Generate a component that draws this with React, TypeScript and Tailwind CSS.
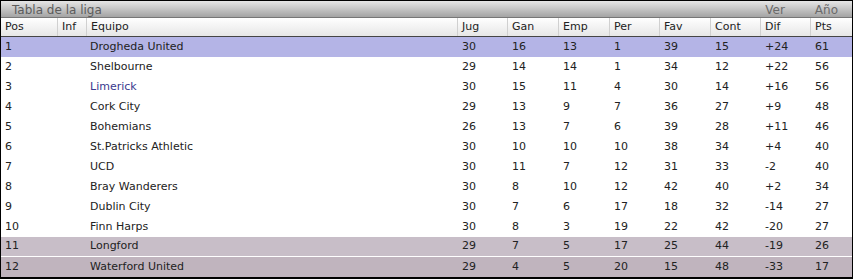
import React from 'react';

type Row = {
  pos: number;
  team: string;
  jug: number;
  gan: number;
  emp: number;
  per: number;
  fav: number;
  cont: number;
  dif: string;
  pts: number;
};

const rows: Row[] = [
  { pos: 1, team: 'Drogheda United', jug: 30, gan: 16, emp: 13, per: 1, fav: 39, cont: 15, dif: '+24', pts: 61 },
  { pos: 2, team: 'Shelbourne', jug: 29, gan: 14, emp: 14, per: 1, fav: 34, cont: 12, dif: '+22', pts: 56 },
  { pos: 3, team: 'Limerick', jug: 30, gan: 15, emp: 11, per: 4, fav: 30, cont: 14, dif: '+16', pts: 56 },
  { pos: 4, team: 'Cork City', jug: 29, gan: 13, emp: 9, per: 7, fav: 36, cont: 27, dif: '+9', pts: 48 },
  { pos: 5, team: 'Bohemians', jug: 26, gan: 13, emp: 7, per: 6, fav: 39, cont: 28, dif: '+11', pts: 46 },
  { pos: 6, team: 'St.Patricks Athletic', jug: 30, gan: 10, emp: 10, per: 10, fav: 38, cont: 34, dif: '+4', pts: 40 },
  { pos: 7, team: 'UCD', jug: 30, gan: 11, emp: 7, per: 12, fav: 31, cont: 33, dif: '-2', pts: 40 },
  { pos: 8, team: 'Bray Wanderers', jug: 30, gan: 8, emp: 10, per: 12, fav: 42, cont: 40, dif: '+2', pts: 34 },
  { pos: 9, team: 'Dublin City', jug: 30, gan: 7, emp: 6, per: 17, fav: 18, cont: 32, dif: '-14', pts: 27 },
  { pos: 10, team: 'Finn Harps', jug: 30, gan: 8, emp: 3, per: 19, fav: 22, cont: 42, dif: '-20', pts: 27 },
  { pos: 11, team: 'Longford', jug: 29, gan: 7, emp: 5, per: 17, fav: 25, cont: 44, dif: '-19', pts: 26 },
  { pos: 12, team: 'Waterford United', jug: 29, gan: 4, emp: 5, per: 20, fav: 15, cont: 48, dif: '-33', pts: 17 },
];

const cols = 'grid grid-cols-[56px_29px_371px_50px_51px_51px_50px_51px_50px_50px_1fr]';

const rowBg = (pos: number) => {
  if (pos === 1) return 'bg-[#b4b4e6]';
  if (pos === 11) return 'bg-[#c8bec8] border-b border-white';
  if (pos === 12) return 'bg-[#c0b4be]';
  return 'bg-white';
};

export default function App() {
  const headers = ['Pos', 'Inf', 'Equipo', 'Jug', 'Gan', 'Emp', 'Per', 'Fav', 'Cont', 'Dif', 'Pts'];

  return (
    <div className="w-[853px] h-[279px] bg-white text-[11px] text-[#222] font-['DejaVu_Sans',Verdana,sans-serif]">
      <div className="border border-black border-b-2">
        <div className="h-[17px] flex items-center justify-between pl-[11px] pr-[14px] pt-[1px] text-[12px] bg-gradient-to-b from-[#e6e6e6] to-[#a4a4a4] text-[#5c5c5c] border-b border-[#777]">
          <span>Tabla de la liga</span>
          <div className="flex gap-[30px] text-[#6a6a6a]">
            <span>Ver</span>
            <span>Año</span>
          </div>
        </div>
        <div className={`${cols} h-[19px] bg-gradient-to-b from-white to-[#e6e6e6] border-b border-[#444]`}>
          {headers.map((h, i) => (
            <div key={h} className={`pl-[4px] flex items-center ${i > 0 ? 'border-l border-[#d0d0d0]' : ''}`}>
              {h}
            </div>
          ))}
        </div>
        {rows.map((r) => (
          <div key={r.pos} className={`${cols} h-[20px] items-center ${rowBg(r.pos)}`}>
            <div className="pl-[4px]">{r.pos}</div>
            <div />
            <div className={`pl-[4px] ${r.pos === 3 ? 'text-[#3a3a8e]' : ''}`}>{r.team}</div>
            <div className="pl-[5px]">{r.jug}</div>
            <div className="pl-[5px]">{r.gan}</div>
            <div className="pl-[5px]">{r.emp}</div>
            <div className="pl-[5px]">{r.per}</div>
            <div className="pl-[5px]">{r.fav}</div>
            <div className="pl-[5px]">{r.cont}</div>
            <div className="pl-[5px]">{r.dif}</div>
            <div className="pl-[5px]">{r.pts}</div>
          </div>
        ))}
      </div>
    </div>
  );
}
